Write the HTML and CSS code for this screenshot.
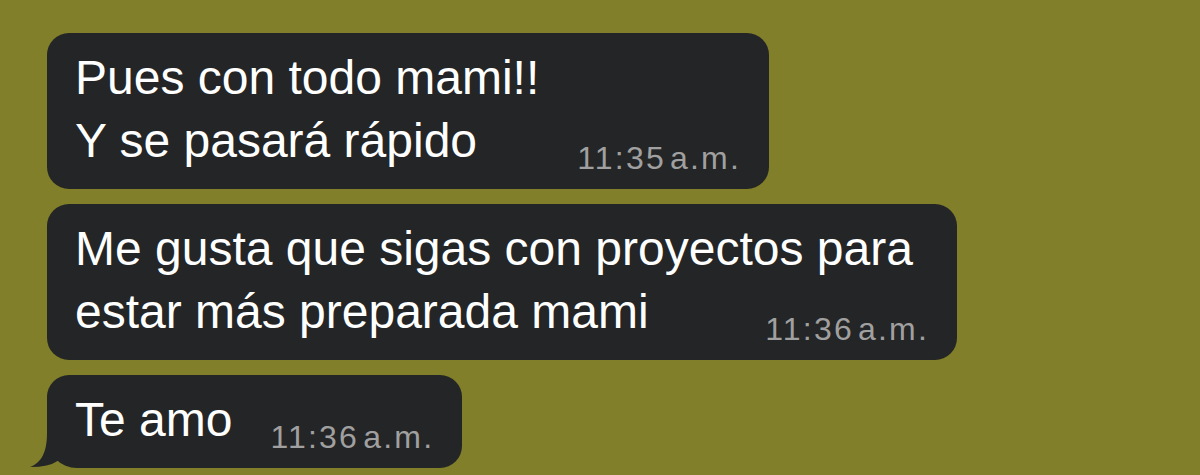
FILE: index.html
```html
<!DOCTYPE html>
<html lang="es">
<head>
    <meta charset="UTF-8">
    <meta name="viewport" content="width=device-width, initial-scale=1.0">
    <title>Chat</title>
    <link rel="stylesheet" href="styles.css">
</head>
<body>
    <div class="chat">
        <div class="bubble">
            <p class="text">Pues con todo mami!!<br>Y se pasará rápido</p>
            <span class="time">11:35 a.m.</span>
        </div>

        <div class="bubble bubble-wrap">
            <p class="text">Me gusta que sigas con proyectos para estar más preparada mami<span class="time">11:36 a.m.</span></p>
        </div>

        <div class="bubble bubble-tail">
            <p class="text">Te amo</p>
            <span class="time">11:36 a.m.</span>
            <!-- cola del globo -->
            <svg class="tail" viewBox="0 0 50 51" width="50" height="51">
                <path d="M18 0 V16 C18 36 12 46 1 50 Q20 50 28.5 44 L40 44 V0 Z" fill="#242526"/>
            </svg>
        </div>
    </div>
</body>
</html>
```

FILE: styles.css
```css
* {
    margin: 0;
    padding: 0;
    box-sizing: border-box;
}

body {
    font-family: 'Liberation Sans', Arial, sans-serif;
    background: #817f29;
    height: 100vh;
    overflow: hidden;
}

.chat {
    display: flex;
    flex-direction: column;
    align-items: flex-start;
    gap: 15px;
    padding: 33px 0 0 47px;
}

.bubble {
    position: relative;
    display: flex;
    align-items: flex-end;
    max-width: 910px;
    padding: 13px 28px 17px 28px;
    background: #242526;
    border-radius: 22px;
}

.text {
    color: #ffffff;
    font-size: 48px;
    line-height: 63px;
}

.time {
    color: #a0a0a0;
    font-size: 32px;
    line-height: 26px;
    letter-spacing: 2.2px;
    word-spacing: -7px;
    white-space: nowrap;
    margin-left: 38px;
    margin-bottom: 1px;
}

/* en el globo largo la hora queda flotando al final de la última línea */
.bubble-wrap .time {
    float: right;
    margin: 36px 0 0 20px;
}

.bubble-tail {
    border-bottom-left-radius: 30px;
}

.tail {
    position: absolute;
    left: -18px;
    bottom: 0;
}
```
